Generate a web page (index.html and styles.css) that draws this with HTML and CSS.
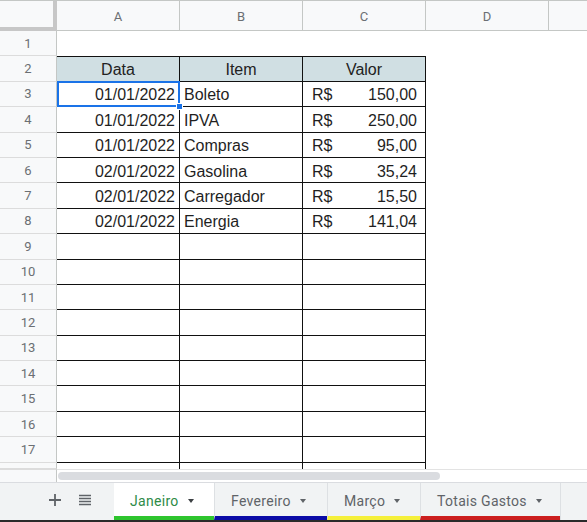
FILE: index.html
```html
<!DOCTYPE html>
<html lang="pt-BR">
<head>
<meta charset="utf-8">
<title>Planilha</title>
<link rel="stylesheet" href="styles.css">
</head>
<body>
<div class="sheet">
  <div class="grid">
    <div class="corner"></div><div class="hd">A</div><div class="hd">B</div><div class="hd">C</div><div class="hd">D</div><div class="hd"></div>

    <div class="rn">1</div><div class="e"></div><div class="e"></div><div class="e"></div><div class="e"></div><div class="e"></div>

    <div class="rn">2</div><div class="t th">Data</div><div class="t th">Item</div><div class="t th">Valor</div><div class="e"></div><div class="e"></div>

    <div class="rn">3</div><div class="t num sel">01/01/2022</div><div class="t txt">Boleto</div><div class="t money"><span>R$</span><span>150,00</span></div><div class="e"></div><div class="e"></div>
    <div class="rn">4</div><div class="t num">01/01/2022</div><div class="t txt">IPVA</div><div class="t money"><span>R$</span><span>250,00</span></div><div class="e"></div><div class="e"></div>
    <div class="rn">5</div><div class="t num">01/01/2022</div><div class="t txt">Compras</div><div class="t money"><span>R$</span><span>95,00</span></div><div class="e"></div><div class="e"></div>
    <div class="rn">6</div><div class="t num">02/01/2022</div><div class="t txt">Gasolina</div><div class="t money"><span>R$</span><span>35,24</span></div><div class="e"></div><div class="e"></div>
    <div class="rn">7</div><div class="t num">02/01/2022</div><div class="t txt">Carregador</div><div class="t money"><span>R$</span><span>15,50</span></div><div class="e"></div><div class="e"></div>
    <div class="rn">8</div><div class="t num">02/01/2022</div><div class="t txt">Energia</div><div class="t money"><span>R$</span><span>141,04</span></div><div class="e"></div><div class="e"></div>

    <div class="rn">9</div><div class="t"></div><div class="t"></div><div class="t"></div><div class="e"></div><div class="e"></div>
    <div class="rn">10</div><div class="t"></div><div class="t"></div><div class="t"></div><div class="e"></div><div class="e"></div>
    <div class="rn">11</div><div class="t"></div><div class="t"></div><div class="t"></div><div class="e"></div><div class="e"></div>
    <div class="rn">12</div><div class="t"></div><div class="t"></div><div class="t"></div><div class="e"></div><div class="e"></div>
    <div class="rn">13</div><div class="t"></div><div class="t"></div><div class="t"></div><div class="e"></div><div class="e"></div>
    <div class="rn">14</div><div class="t"></div><div class="t"></div><div class="t"></div><div class="e"></div><div class="e"></div>
    <div class="rn">15</div><div class="t"></div><div class="t"></div><div class="t"></div><div class="e"></div><div class="e"></div>
    <div class="rn">16</div><div class="t"></div><div class="t"></div><div class="t"></div><div class="e"></div><div class="e"></div>
    <div class="rn">17</div><div class="t"></div><div class="t"></div><div class="t"></div><div class="e"></div><div class="e"></div>

    <div class="rn"></div><div class="t part"></div><div class="t part"></div><div class="t part"></div><div class="e"></div><div class="e"></div>

    <div class="rn sc-left"></div>
    <div class="scroll"><div class="thumb"></div></div>
  </div>

  <div class="tabs">
    <div class="tab-tools">
      <svg class="ico" width="14" height="14" viewBox="0 0 14 14"><path d="M7 1v12M1 7h12" stroke="#5f6368" stroke-width="1.8" fill="none"/></svg>
      <svg class="ico" width="12" height="12" viewBox="0 0 12 12"><path d="M0 1.5h12M0 4.5h12M0 7.5h12M0 10.5h12" stroke="#5f6368" stroke-width="1.4" fill="none"/></svg>
    </div>
    <div class="tab active jan"><span>Janeiro</span><i class="arrow"></i></div>
    <div class="tab fev"><span>Fevereiro</span><i class="arrow"></i></div>
    <div class="tab mar"><span>Março</span><i class="arrow"></i></div>
    <div class="tab tot"><span>Totais Gastos</span><i class="arrow"></i></div>
    <div class="tab-rest"></div>
  </div>
</div>
</body>
</html>
```

FILE: styles.css
```css
html, body {
  margin: 0;
  padding: 0;
  background: #ffffff;
}

.sheet {
  width: 587px;
  height: 522px;
  overflow: hidden;
  font-family: "Liberation Sans", Arial, sans-serif;
  display: flex;
  flex-direction: column;
}

.grid {
  display: grid;
  grid-template-columns: 57px repeat(5, 123px);
  grid-template-rows: 31px repeat(17, 25.4px) 6px 13px;
  width: 672px;
  flex: none;
}

.grid > div {
  box-sizing: border-box;
  min-width: 0;
}

.corner {
  background: #f8f9fa;
  border-top: 1px solid #c4c7c5;
  box-shadow: inset -4px -4px 0 0 #c7c7c7;
}

.hd {
  background: #f8f9fa;
  border-top: 1px solid #c4c7c5;
  border-right: 1px solid #c4c7c5;
  border-bottom: 1px solid #c4c7c5;
  color: #6b6f73;
  font-family: Roboto, "Liberation Sans", sans-serif;
  font-size: 13px;
  display: flex;
  align-items: center;
  justify-content: center;
  padding-top: 1px;
}

.rn {
  background: #f8f9fa;
  border-right: 1px solid #c4c7c5;
  border-bottom: 1px solid #dcdcdc;
  color: #6b6f73;
  font-family: Roboto, "Liberation Sans", sans-serif;
  font-size: 13px;
  display: flex;
  align-items: center;
  justify-content: center;
}

.e {
  background: #ffffff;
}

.t {
  border-right: 1px solid #111;
  border-bottom: 1px solid #111;
  color: #1f1f1f;
  font-size: 16px;
  display: flex;
  align-items: center;
  white-space: nowrap;
  overflow: visible;
  position: relative;
  padding-top: 3px;
}

.th {
  border-top: 1px solid #111;
  background: #d0dfe3;
  justify-content: center;
  color: #222;
  padding-top: 2px;
}

.num {
  justify-content: flex-end;
  padding-right: 4px;
}

.txt {
  padding-left: 4px;
}

.money {
  justify-content: space-between;
  padding-left: 9px;
  padding-right: 8px;
}

.part {
  border-bottom: none;
}

.sel::before {
  content: "";
  position: absolute;
  left: 0;
  top: -1px;
  right: -1px;
  bottom: -1px;
  border: 2px solid #1a73e8;
  z-index: 1;
}

.sel::after {
  content: "";
  position: absolute;
  right: -4px;
  bottom: -4px;
  width: 5px;
  height: 5px;
  background: #1a73e8;
  border: 1px solid #ffffff;
  z-index: 2;
}

.sc-left {
  border-top: 1px solid #dcdcdc;
  border-bottom: none !important;
}

.scroll {
  grid-column: 2 / span 5;
  border-top: 1px solid #e3e3e3;
  display: flex;
  align-items: center;
  padding-left: 1px;
}

.thumb {
  width: 382px;
  height: 8px;
  border-radius: 4px;
  background: #dadce0;
}

.tabs {
  flex: 1;
  display: flex;
  background: #f1f3f4;
  border-top: 1px solid #dadce0;
  border-bottom: 2px solid #2a2a2a;
  box-sizing: border-box;
  font-family: Roboto, "Liberation Sans", sans-serif;
  font-size: 14px;
  letter-spacing: 0.3px;
}

.tab-tools {
  width: 114px;
  flex: none;
  display: flex;
  align-items: center;
  justify-content: flex-end;
  gap: 17px;
  padding-right: 23px;
  box-sizing: border-box;
  padding-top: 2px;
  padding-bottom: 4px;
}

.tab {
  flex: none;
  box-sizing: border-box;
  display: flex;
  align-items: center;
  gap: 9px;
  padding-left: 16px;
  padding-top: 3px;
  color: #5f6368;
  border-bottom: 4px solid transparent;
  border-left: 1px solid #dde0e3;
}

.tab.active {
  background: #ffffff;
  color: #2e8b47;
  border-left: none;
}

.arrow {
  width: 0;
  height: 0;
  border-left: 3.5px solid transparent;
  border-right: 3.5px solid transparent;
  border-top: 4px solid #5f6368;
}

.tab.active .arrow {
  border-top-color: #3c4043;
}

.jan { width: 100px; border-bottom-color: #2ec52e; }
.fev { width: 113px; border-bottom-color: #0b0ba6; }
.mar { width: 93px; border-bottom-color: #f5f03a; }
.tot { width: 140px; border-bottom-color: #cc1f1f; }

.tab-rest {
  flex: 1;
  border-left: 1px solid #dde0e3;
}
```
